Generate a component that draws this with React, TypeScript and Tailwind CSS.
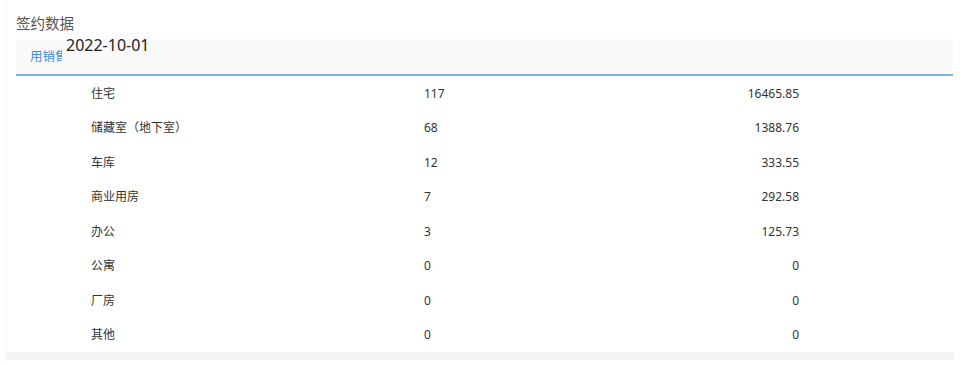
import React from "react";

const rows: [string, string, string][] = [
  ["住宅", "117", "16465.85"],
  ["储藏室（地下室）", "68", "1388.76"],
  ["车库", "12", "333.55"],
  ["商业用房", "7", "292.58"],
  ["办公", "3", "125.73"],
  ["公寓", "0", "0"],
  ["厂房", "0", "0"],
  ["其他", "0", "0"],
];

export default function App() {
  return (
    <div
      className="w-[964px] h-[365px] bg-white overflow-hidden"
      style={{ fontFamily: '"Noto Sans", "Noto Sans CJK SC", sans-serif' }}
    >
      <div className="ml-[6px] w-[947px] h-[361px] border-l border-[#f0f0f0] flex flex-col">
        <div className="h-[39px] pl-[9px] pt-[13px] text-[14.5px] leading-[20px] text-[#555]">
          签约数据
        </div>
        <div className="ml-[9px] w-[937px] relative">
          <div className="h-[37px] bg-[#fafafa] border-b-2 border-[#7ab3e8] flex">
            <div className="w-[46px] overflow-hidden whitespace-nowrap pl-[14px] pt-[9px] text-[12.5px] leading-[18px] text-[#3c8ee0]">
              用销售额
            </div>
          </div>
          <div className="absolute left-[50px] top-[-4px] text-[16px] leading-[20px] text-[#222]">
            2022-10-01
          </div>
          {rows.map(([a, b, c]) => (
            <div
              key={a}
              className="h-[34.5px] flex items-center pt-[1px] pl-[75px] text-[12px] text-[#333]"
            >
              <div className="w-[333px]">{a}</div>
              <div className="w-[200px]">{b}</div>
              <div className="w-[175px] text-right">{c}</div>
            </div>
          ))}
        </div>
        <div className="h-[8px] bg-[#f4f5f7] w-[947px]" />
      </div>
    </div>
  );
}
